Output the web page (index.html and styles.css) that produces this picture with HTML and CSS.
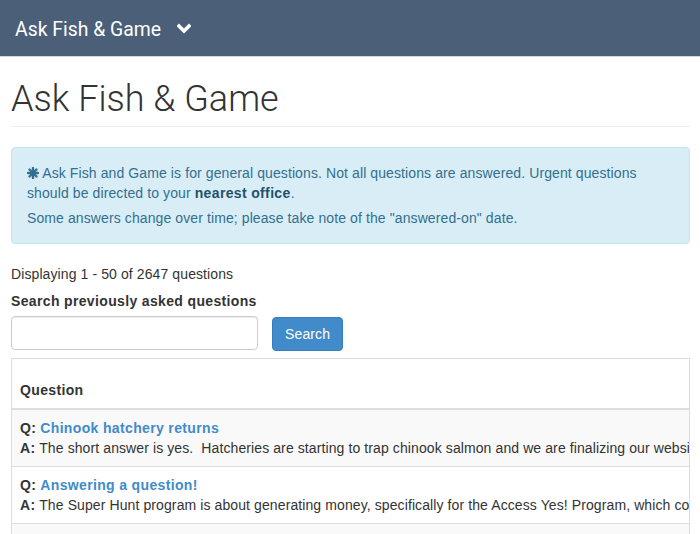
FILE: index.html
```
<!DOCTYPE html>
<html>
<head>
<meta charset="utf-8">
<link rel="stylesheet" href="styles.css">
</head>
<body>
<nav class="navbar">
  <span class="brand">Ask Fish &amp; Game</span>
  <svg class="chevron" width="14" height="12" viewBox="0 0 14 12"><polyline points="2,3 7,8 12,3" fill="none" stroke="#fff" stroke-width="3.4" stroke-linecap="square"/></svg>
</nav>
<main class="container">
  <h1 class="page-title">Ask Fish &amp; Game</h1>
  <div class="alert">
    <p><svg class="asterisk" width="12" height="12" viewBox="0 0 12 12"><g stroke="#31708f" stroke-width="2.4" stroke-linecap="round"><line x1="6" y1="1" x2="6" y2="11"/><line x1="1" y1="6" x2="11" y2="6"/><line x1="2.5" y1="2.5" x2="9.5" y2="9.5"/><line x1="9.5" y1="2.5" x2="2.5" y2="9.5"/></g></svg> Ask Fish and Game is for general questions. Not all questions are answered. Urgent questions should be directed to your <b>nearest office</b>.</p>
    <p>Some answers change over time; please take note of the "answered-on" date.</p>
  </div>
  <p class="count">Displaying 1 - 50 of 2647 questions</p>
  <label class="search-label" for="q">Search previously asked questions</label>
  <form class="search">
    <input id="q" class="search-input" type="text">
    <button class="btn" type="button">Search</button>
  </form>
  <div class="table-wrap">
    <div class="th">Question</div>
    <div class="tr striped">
      <div><b>Q:</b> <a class="qlink" href="#">Chinook hatchery returns</a></div>
      <div><b>A:</b> The short answer is yes.&nbsp; Hatcheries are starting to trap chinook salmon and we are finalizing our website with the latest counts for each hatchery.</div>
    </div>
    <div class="tr">
      <div><b>Q:</b> <a class="qlink" href="#">Answering a question!</a></div>
      <div><b>A:</b> The Super Hunt program is about generating money, specifically for the Access Yes! Program, which compensates landowners.</div>
    </div>
    <div class="tr striped">
      <div><b>Q:</b> <a class="qlink" href="#">Fishing license</a></div>
      <div><b>A:</b> Yes.</div>
    </div>
  </div>
</main>
</body>
</html>
```
FILE: styles.css
```
html, body { margin: 0; padding: 0; overflow: hidden; height: 534px; }
body {
  font-family: "Liberation Sans", Arial, sans-serif;
  font-size: 14px;
  line-height: 20px;
  letter-spacing: 0.1px;
  color: #333;
  background: #fff;
}
b, .search-label, .th { letter-spacing: 0.35px; }
.navbar {
  height: 57px;
  background: #4b6078;
  border-bottom: 1px solid #d6d6d6;
  display: flex;
  align-items: center;
  padding: 3px 0 0 15px;
  box-sizing: border-box;
}
.brand {
  font-family: Roboto, "Liberation Sans", sans-serif;
  font-size: 19.4px;
  letter-spacing: 0;
  color: #fff;
  line-height: 20px;
}
.chevron { margin-left: 16px; margin-top: -1px; }
.container { padding: 0 11px; width: 679px; box-sizing: content-box; }
.page-title {
  font-family: Roboto, "Liberation Sans", sans-serif;
  font-weight: 300;
  font-size: 36px;
  letter-spacing: 0;
  line-height: 40px;
  margin: 22px 0 0;
  padding-bottom: 7px;
  border-bottom: 1px solid #eee;
  color: #333;
}
.alert {
  margin-top: 20px;
  background: #d9edf7;
  border: 1px solid #bce8f1;
  border-radius: 4px;
  color: #31708f;
  padding: 15px;
}
.alert p { margin: 0; }
.alert p + p { margin-top: 5px; }
.alert b { color: #245269; }
.asterisk { vertical-align: -1px; }
.count { margin: 20px 0 7px; }
.search-label { display: block; font-weight: bold; margin-bottom: 5px; }
.search { display: flex; gap: 14px; margin: 0 0 7px; align-items: flex-start; }
.search-input {
  width: 247px;
  height: 34px;
  box-sizing: border-box;
  border: 1px solid #ccc;
  border-radius: 4px;
  box-shadow: inset 0 1px 1px rgba(0,0,0,.075);
  margin: 0;
}
.btn {
  margin-top: 1px;
  height: 34px;
  padding: 0 12px;
  background: #428bca;
  border: 1px solid #357ebd;
  border-radius: 4px;
  color: #fff;
  font-family: "Liberation Sans", Arial, sans-serif;
  font-size: 14px;
  letter-spacing: 0.13px;
}
.table-wrap {
  border: 1px solid #ddd;
  overflow: hidden;
  box-sizing: border-box;
  width: 679px;
}
.th {
  font-weight: bold;
  padding: 21px 8px 8px;
  border-bottom: 2px solid #ddd;
}
.tr {
  padding: 8px;
  border-top: 1px solid #ddd;
  white-space: nowrap;
}
.th + .tr { border-top: 0; }
.striped { background: #f9f9f9; }
.qlink { color: #428bca; font-weight: bold; text-decoration: none; letter-spacing: 0.35px; }
```
